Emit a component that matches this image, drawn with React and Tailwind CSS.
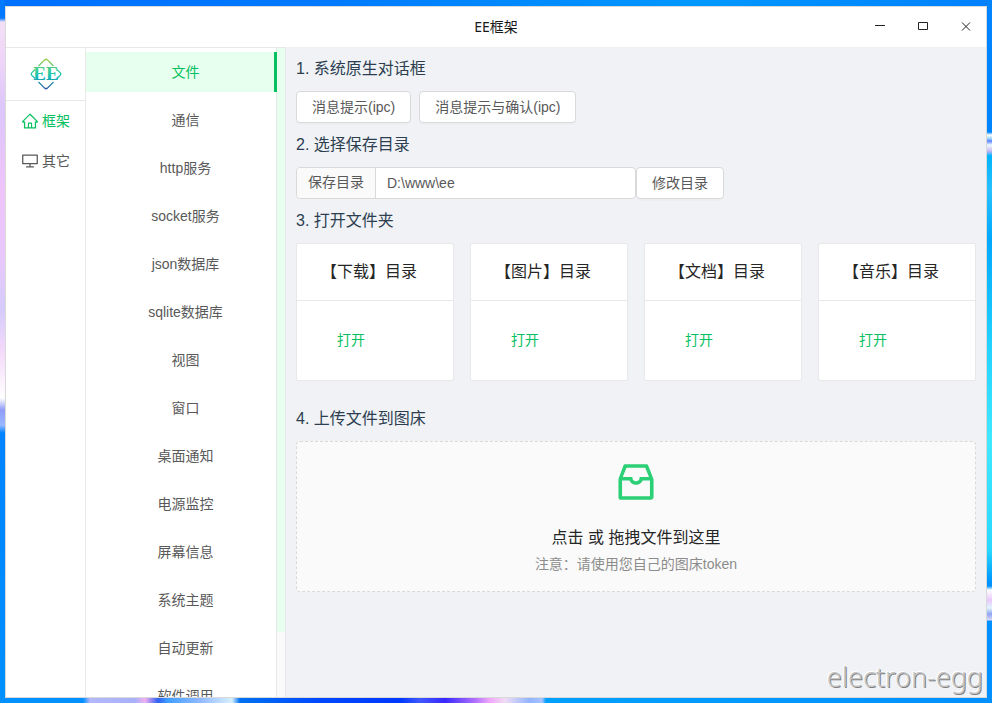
import { AiOutlineDesktop, AiOutlineHome, AiOutlineInbox } from "react-icons/ai";

const navItems = [
  { label: "框架", icon: AiOutlineHome, active: true },
  { label: "其它", icon: AiOutlineDesktop, active: false },
];

const menuItems = [
  "文件",
  "通信",
  "http服务",
  "socket服务",
  "json数据库",
  "sqlite数据库",
  "视图",
  "窗口",
  "桌面通知",
  "电源监控",
  "屏幕信息",
  "系统主题",
  "自动更新",
  "软件调用",
];

const folders = ["【下载】目录", "【图片】目录", "【文档】目录", "【音乐】目录"];

const Logo = () => (
  <svg width="32" height="32" viewBox="0 0 32 32" fill="none" role="img" aria-label="EE">
    <defs>
      <linearGradient id="logo" x1="0" y1="0" x2="0" y2="32" gradientUnits="userSpaceOnUse">
        <stop offset="0" stopColor="#a3c93a" />
        <stop offset="0.35" stopColor="#3fcf8e" />
        <stop offset="0.6" stopColor="#14bdb8" />
        <stop offset="1" stopColor="#2f4fa3" />
      </linearGradient>
    </defs>
    <g stroke="url(#logo)" strokeWidth="1.3">
      <path d="M8.500 8 14.600 1.900Q16 .6 17.400 1.900L23.500 8" />
      <path d="M8.500 24l6.100 6.100q1.400 1.300 2.800 0l6.100-6.100" />
      <path d="M5 11.500 1.900 14.600Q.6 16 1.900 17.400L5 20.500" />
      <path d="M27 11.500l3.100 3.100q1.300 1.400 0 2.800L27 20.500" />
    </g>
    <text
      x="16"
      y="22"
      textAnchor="middle"
      fill="url(#logo)"
      className="font-['Liberation_Serif',serif] text-[19px] font-bold"
    >
      EE
    </text>
  </svg>
);

const TitleBar = () => (
  <header className="grid h-10 shrink-0 grid-cols-[1fr_auto_1fr] items-center bg-white">
    <h1 className="col-start-2 font-['Noto_Sans','Noto_Sans_CJK_SC',sans-serif] text-sm text-[#1a1a1a]">
      EE框架
    </h1>
    <div className="flex h-10 justify-end gap-[3px] text-[#222]">
      <button className="flex w-10 items-center justify-center" aria-label="minimize">
        <svg width="12" height="12" viewBox="0 0 12 12" fill="none" stroke="currentColor">
          <path d="M1 4.500h10" />
        </svg>
      </button>
      <button className="flex w-10 items-center justify-center" aria-label="maximize">
        <svg width="12" height="12" viewBox="0 0 12 12" fill="none" stroke="currentColor">
          <path d="M1.500 1.500h9v7h-9z" />
        </svg>
      </button>
      <button className="flex w-10 items-center justify-center" aria-label="close">
        <svg width="12" height="12" viewBox="0 0 12 12" fill="none" stroke="currentColor">
          <path d="M2 1.500l8 8M10 1.500l-8 8" />
        </svg>
      </button>
    </div>
  </header>
);

const SideNav = () => (
  <nav className="w-20 shrink-0 border-t border-r border-[#e8e8e8] bg-white">
    <div className="flex h-[53px] items-center justify-center border-b border-[#e8e8e8]">
      <Logo />
    </div>
    {navItems.map(({ label, icon: Icon, active }) => (
      <a
        key={label}
        href="#"
        className={`flex h-10 items-center justify-center gap-[3px] text-sm ${
          active ? "text-[#07c160]" : "text-[#595959]"
        }`}
      >
        <Icon size={18} />
        {label}
      </a>
    ))}
  </nav>
);

const SubMenu = () => (
  <div className="flex w-[200px] shrink-0 border-t border-r border-[#e8e8e8] bg-white">
    <ul className="flex flex-1 flex-col gap-2 overflow-hidden pt-1 shadow-[inset_-1px_0_0_#e8e8e8]">
      {menuItems.map((item, i) => (
        <li key={item} className="shrink-0">
          <a
            href="#"
            className={`block h-10 pr-4 pl-6 text-center text-sm leading-10 ${
              i === 0
                ? "bg-[#e6ffee] text-[#07c160] shadow-[inset_-3px_0_0_#07c160]"
                : "text-[#595959]"
            }`}
          >
            {item}
          </a>
        </li>
      ))}
    </ul>
    <div className="w-2 bg-[#fafafa]">
      <div className="h-9/10 bg-[#e6ffee]" />
    </div>
  </div>
);

const Heading = ({ children }) => (
  <h2 className="flex h-11 items-center text-base text-[#2c3e50]">{children}</h2>
);

const Button = ({ children }) => (
  <button className="h-8 shrink-0 rounded border border-[#d9d9d9] bg-white px-[15px] text-sm text-[#595959] shadow-[0_2px_0_rgba(0,0,0,0.015)]">
    {children}
  </button>
);

const Content = () => (
  <main className="relative flex-1 overflow-hidden bg-[#f0f2f5] px-2.5">
    <Heading>1. 系统原生对话框</Heading>
    <div className="flex gap-2">
      <Button>消息提示(ipc)</Button>
      <Button>消息提示与确认(ipc)</Button>
    </div>

    <Heading>2. 选择保存目录</Heading>
    <div className="flex">
      <div className="flex h-8 w-1/2 rounded border border-[#d9d9d9] bg-white text-sm text-[#595959]">
        <label
          htmlFor="dir"
          className="shrink-0 rounded-l border-r border-[#d9d9d9] bg-[#fafafa] px-[11px] leading-7"
        >
          保存目录
        </label>
        <input
          id="dir"
          type="text"
          defaultValue="D:\www\ee"
          className="min-w-0 flex-1 rounded-r px-[11px] outline-none"
        />
      </div>
      <Button>修改目录</Button>
    </div>

    <Heading>3. 打开文件夹</Heading>
    <div className="grid grid-cols-4 gap-4">
      {folders.map((folder) => (
        <section key={folder} className="rounded-xs border border-[#e8e8e8] bg-white">
          <h3 className="border-b border-[#e8e8e8] px-6 py-4 text-base text-[#262626]">
            {folder}
          </h3>
          <div className="flex h-[79px] items-start px-6 py-6">
            <button className="h-[30px] px-4 text-sm text-[#07c160]">打开</button>
          </div>
        </section>
      ))}
    </div>

    <div className="mt-4">
      <Heading>4. 上传文件到图床</Heading>
      <button className="flex w-full flex-col items-center rounded border border-dashed border-[#d9d9d9] bg-[#fafafa] pt-4 pb-[17px]">
        <AiOutlineInbox size={48} className="mb-5 text-[#2bcf76]" />
        <span className="text-base text-[#262626]">点击 或 拖拽文件到这里</span>
        <span className="mt-1 text-sm leading-5 text-[#8c8c8c]">
          注意：请使用您自己的图床token
        </span>
      </button>
    </div>

    <p className="absolute right-[3px] bottom-0 font-['Noto_Sans',sans-serif] text-[27px] font-light text-[#c4c4c4] [text-shadow:1px_1px_0_#808080,-1px_-1px_0_#fff]">
      electron-egg
    </p>
  </main>
);

// wallpaper that shows round the window edges
const wallpaper =
  "[background:linear-gradient(#0078ff_0_18px,#f3dff6_22px,#efd5f8_60px,#dcc6fb_110px,#efc4fb_190px,#e8c8fc_260px,#d5cbfc_310px,#f3d9fa_350px,#fff_398px,#8f9bf8_410px,#9ab8ff_425px,#0084ff_433px,#0090ff)_left/5px_100%_no-repeat,linear-gradient(#0084ff_0_132px,#fff_135px,#90d0ff_139px,#6080ff_141px,#f0fcff_145px,#c8b8f4_151px,#00b4ff_156px,#28c0ff_190px,#00a8ff_240px,#20d0ff_340px,#40e8ff_440px,#28d8ff_550px,#0098ff_580px,#0090ff_586px,#fff_590px,#e8c8fc_600px,#e0f4ff_608px,#8fa4f4_614px,#dcd8fc_620px,#0090ff_621px)_right/5px_100%_no-repeat,linear-gradient(90deg,#0090ff_0_83px,#b4b8fa_90px,#a8b0f8_135px,#f0b0f0_145px,#3060f0_158px,#40a0ff_168px,#90b8ff_200px,#d8f0ff_232px,#0070f0_240px,#0048ff_320px,#0038ff_400px,#4058ff_420px,#3828ff_445px,#b070ff_475px,#f0a8f8_490px,#f0dcf4_505px,#90b4ff_530px,#a8c4ff_542px,#00a0ff_546px,#0090ff)_bottom/100%_5px_no-repeat,linear-gradient(90deg,#0070ff,#0078ff_300px,#0098ff_700px,#0080ff)]";

const App = () => {
  return (
    <div
      className={`h-screen px-[5px] pt-1.5 pb-[5px] font-['Liberation_Sans','Noto_Sans_CJK_SC',sans-serif] ${wallpaper}`}
    >
      <div className="flex h-full flex-col overflow-hidden border border-[#d9d9d9] bg-[#f0f2f5]">
        <TitleBar />
        <div className="flex min-h-0 flex-1">
          <SideNav />
          <SubMenu />
          <Content />
        </div>
      </div>
    </div>
  );
};

export default App;
